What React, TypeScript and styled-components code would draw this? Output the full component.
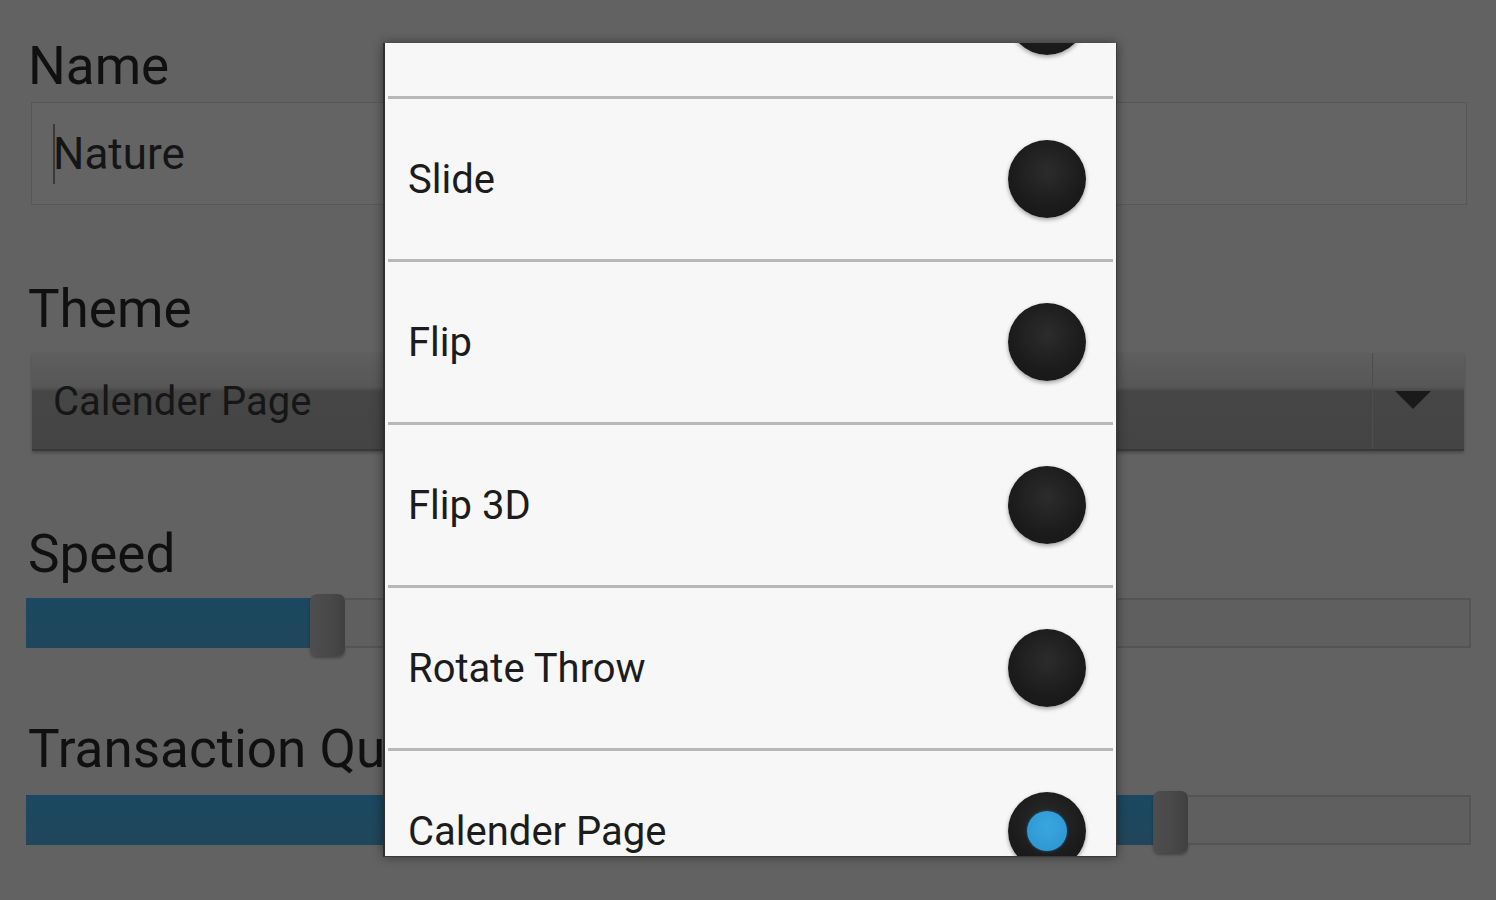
import React from "react";
import styled, { createGlobalStyle } from "styled-components";

const GlobalStyle = createGlobalStyle`
  html, body {
    margin: 0;
    padding: 0;
    background: #616161;
  }
  body {
    font-family: Roboto, "Noto Sans", "Liberation Sans", sans-serif;
  }
`;

const Screen = styled.div`
  position: relative;
  width: 1496px;
  height: 900px;
  overflow: hidden;
  background: #626262;
`;

const Form = styled.div`
  display: flex;
  flex-direction: column;
  padding: 0 25px 0 26px;
`;

const Label = styled.div<{ $top: number }>`
  margin-top: ${(p) => p.$top}px;
  margin-left: 2px;
  font-size: 53px;
  line-height: 53px;
  color: #101010;
  white-space: nowrap;
`;

const TextInput = styled.div`
  display: flex;
  align-items: center;
  margin: 9px 4px 0 5px;
  height: 101px;
  padding-left: 21px;
  border: 1px solid #575757;
  background: #646464;
  font-size: 44px;
  color: #151515;
`;

const Cursor = styled.span`
  width: 2px;
  height: 60px;
  margin-right: -2px;
  background: #3a3a3a;
`;

const Spinner = styled.div`
  display: flex;
  align-items: stretch;
  margin: 17px 7px 0 6px;
  height: 96px;
  background: linear-gradient(#5e5e5e 0%, #575757 35%, #464646 40%, #444 100%);
  border-bottom: 2px solid #383838;
  box-shadow: 0 2px 3px rgba(0, 0, 0, 0.25);
`;

const SpinnerText = styled.div`
  flex: 1;
  display: flex;
  align-items: center;
  padding-left: 21px;
  font-size: 40px;
  color: #161616;
  border-right: 1px solid #4d4d4d;
`;

const SpinnerArrow = styled.div`
  width: 91px;
  padding-right: 12px;
  box-sizing: border-box;
  display: flex;
  align-items: center;
  justify-content: center;
`;

const Track = styled.div<{ $top: number }>`
  position: relative;
  display: flex;
  margin-top: ${(p) => p.$top}px;
  height: 50px;
`;

const Filled = styled.div`
  height: 100%;
  background: linear-gradient(#1b4862, #21465a);
`;

const Rest = styled.div`
  flex: 1;
  height: 100%;
  box-sizing: border-box;
  border: 2px solid #545454;
  border-left: none;
  background: #5f5f5f;
`;

const Thumb = styled.div`
  width: 35px;
  height: 62px;
  margin: -4px 0 0 -1px;
  border-radius: 7px;
  background: linear-gradient(90deg, #4e4e4e, #484848 60%, #404040);
  box-shadow: 0 2px 3px rgba(0, 0, 0, 0.3);
  flex-shrink: 0;
`;

const Dialog = styled.div`
  position: absolute;
  left: 383px;
  top: 43px;
  width: 734px;
  height: 814px;
  overflow: hidden;
  background: #f7f7f7;
  box-sizing: border-box;
  border-left: 2px solid #2e2e2e;
  border-right: 1px solid #3a3a3a;
  border-bottom: 1px solid #3a3a3a;
  box-shadow: 0 0 10px rgba(0, 0, 0, 0.45);
`;

const List = styled.div`
  display: flex;
  flex-direction: column;
  margin-top: -107px;
`;

const Row = styled.div`
  display: flex;
  align-items: center;
  justify-content: space-between;
  height: 160px;
  padding: 0 30px 0 23px;
  font-size: 40px;
  color: #1c1c1c;
  flex-shrink: 0;
`;

const Divider = styled.div`
  height: 3px;
  margin: 0 3px 0 3px;
  background: #b8b8b8;
  flex-shrink: 0;
`;

const Radio = styled.div`
  width: 78px;
  height: 78px;
  border-radius: 50%;
  display: flex;
  align-items: center;
  justify-content: center;
  background: radial-gradient(circle at 50% 40%, #2c2c2c, #1b1b1b 60%, #161616);
  box-shadow: 0 2px 4px rgba(0, 0, 0, 0.35);
  filter: blur(0.6px);
  flex-shrink: 0;
`;

const Dot = styled.div`
  width: 40px;
  height: 40px;
  border-radius: 50%;
  background: radial-gradient(circle at 50% 40%, #3aa6e0, #2b93cf);
  box-shadow: 0 0 3px rgba(30, 120, 180, 0.7);
`;

const items = ["Fade", "Slide", "Flip", "Flip 3D", "Rotate Throw", "Calender Page"];
const selected = "Calender Page";

const Slider: React.FC<{ top: number; value: number }> = ({ top, value }) => (
  <Track $top={top}>
    <Filled style={{ width: value }} />
    <Thumb />
    <Rest />
  </Track>
);

export default function App() {
  return (
    <>
      <GlobalStyle />
      <Screen>
        <Form>
          <Label $top={40}>Name</Label>
          <TextInput>
            <Cursor />
            Nature
          </TextInput>

          <Label $top={78}>Theme</Label>
          <Spinner>
            <SpinnerText>Calender Page</SpinnerText>
            <SpinnerArrow>
              <svg width="36" height="20" viewBox="0 0 36 20">
                <polygon points="0,0 36,0 18,18" fill="#1a1a1a" />
              </svg>
            </SpinnerArrow>
          </Spinner>

          <Label $top={77}>Speed</Label>
          <Slider top={17} value={285} />

          <Label $top={75}>Transaction Quality</Label>
          <Slider top={19} value={1128} />
        </Form>

        <Dialog>
          <List>
            {items.map((name, i) => (
              <React.Fragment key={name}>
                {i > 0 && <Divider />}
                <Row>
                  <span>{i === 0 ? "" : name}</span>
                  <Radio>{name === selected && <Dot />}</Radio>
                </Row>
              </React.Fragment>
            ))}
          </List>
        </Dialog>
      </Screen>
    </>
  );
}
